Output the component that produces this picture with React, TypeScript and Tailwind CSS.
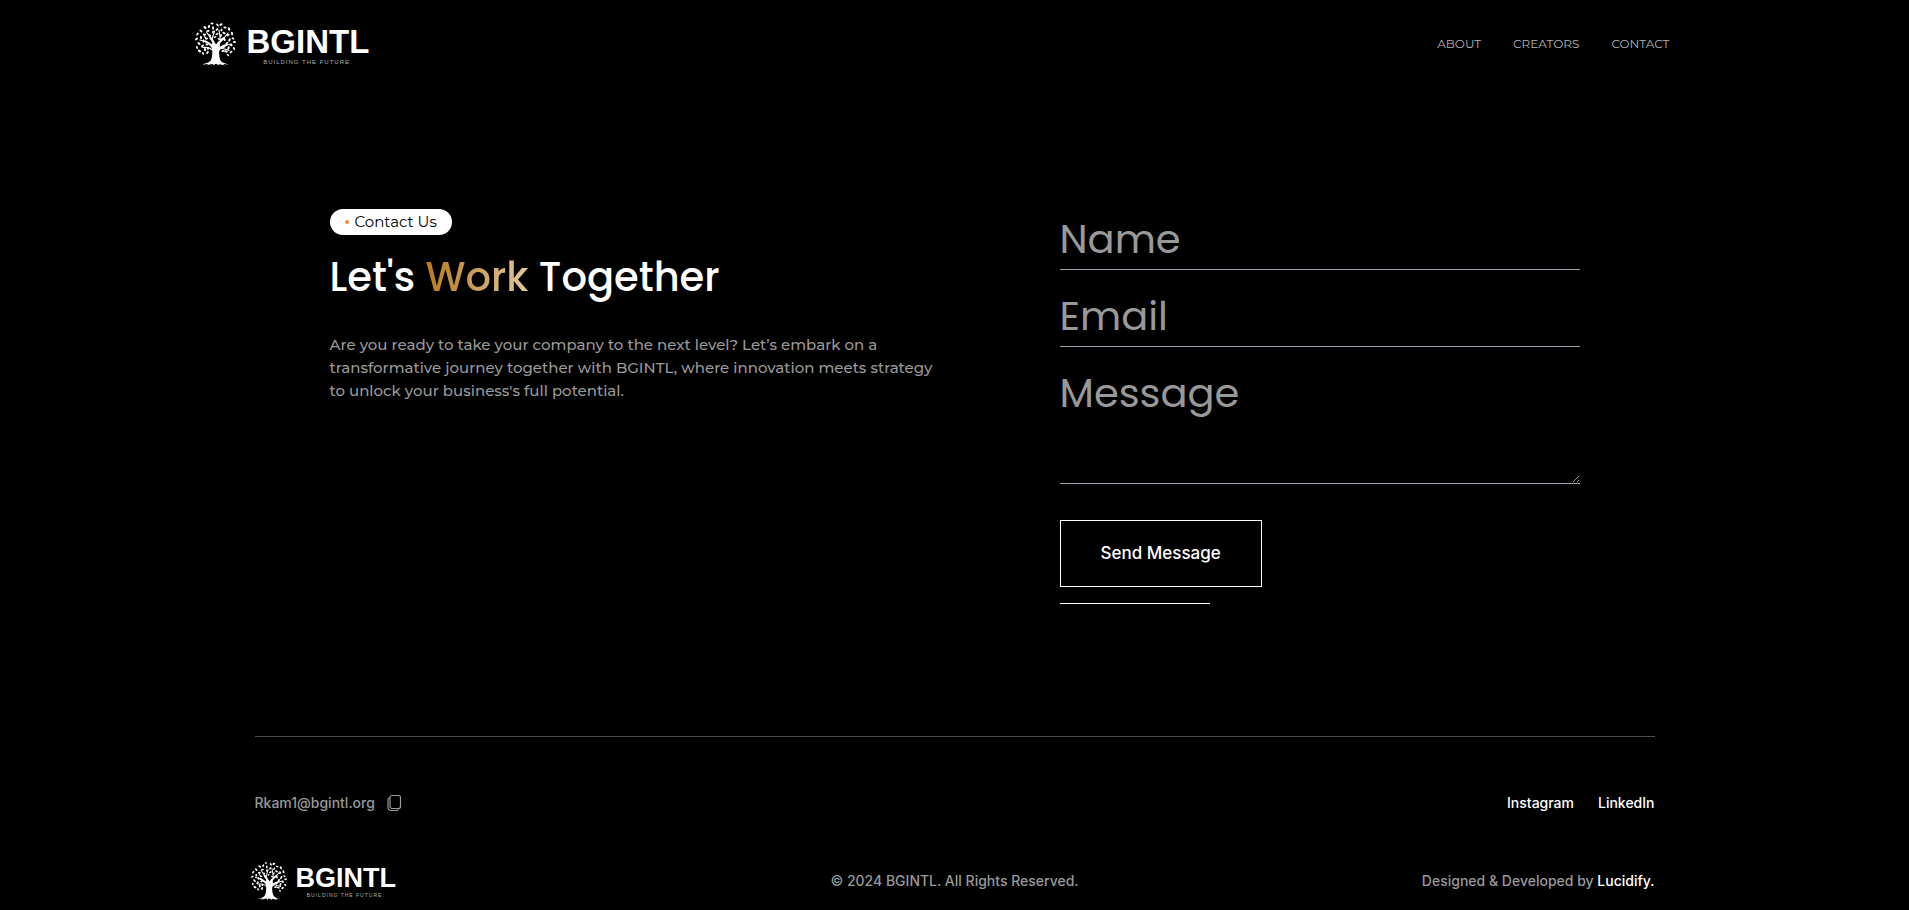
import React from "react";

const leafDots: [number, number, number][] = [
  [17, 1.5, 1], [22.5, 3, 1.1], [14, 4.5, 1.1], [26, 2.5, 1.1], [10, 5.5, 1.2], [18, 6, 1.1], [22, 7.5, 1.1],
  [30, 5.5, 1.1], [34, 7, 1.2], [26.5, 8, 1], [13, 9, 1.1], [6, 9, 1.2], [18, 10, 1], [22, 12, 1.1], [29, 11, 1.1],
  [37, 11.5, 1.2], [2.5, 12, 1.1], [9.5, 12.5, 1.1], [15, 13.5, 1], [26, 13.5, 1], [33, 13, 1.1], [38, 16.5, 1],
  [6, 15.5, 1.2], [1.5, 17, 1.1], [11.5, 16.5, 1], [29.5, 17.5, 1.1], [34.5, 18, 1.2], [39.5, 20, 1.1], [4, 21.5, 1.2],
  [8.5, 19, 1.1], [32, 21, 1.1], [36, 23, 1.1], [2, 25.5, 1], [7.5, 24, 1.2], [12, 22.5, 1], [39, 26.5, 1],
  [33.5, 26, 1.2], [29, 25, 1], [4.5, 29, 1.2], [10, 27.5, 1.2], [36, 30, 1.1], [31, 29.5, 1.2], [8, 31.5, 1],
  [12.5, 30.5, 1.1], [28, 29, 1.1], [33, 33, 0.9], [13, 26.5, 1], [20, 15, 0.9], [24, 17, 0.9],
];

function TreeMark({ className }: { className: string }) {
  return (
    <svg viewBox="0 0 41 44" className={className} fill="currentColor" aria-hidden="true">
      {leafDots.map(([x, y, r], i) => (
        <ellipse key={i} cx={x} cy={y} rx={r * 1.5} ry={r * 0.9} transform={`rotate(${(i * 53) % 180} ${x} ${y})`} />
      ))}
      <path d="M16.5 22.5c.8 3 1 5.500.8 8.500-.2 4-.8 7-2.500 8.600-2 1.500-4.800 1.700-7.300 3 2.600-.5 4.200-.7 6-.7-.8.500-1.500 1-2 1.600 2-.8 4-1.300 6.200-1.500l1.300 1.500.8-1.500 2 .1 1.600 1.400.4-1.300c2.200.1 4.200.6 6.200 1.400-.5-.6-1.200-1.100-2-1.500 2 0 3.500.3 5.800.7-2.500-1.300-5.200-1.500-7.200-3-1.700-1.500-2.400-4.600-2.500-8.600 0-2.500.2-4.500 1-6.700l-1.600-5.500-2.200 3.200-3-2.500Z" />
      <g fill="none" stroke="currentColor" strokeLinecap="round">
        <path strokeWidth="2.200" d="M18.500 28c-.6-4-3.500-6.500-8-8.500M20 26c-.5-4-1.500-7-4.500-10M22.500 26c0-4 2-7 6.500-10M22.500 30c1.500-4 4.500-6 9-7" />
        <path strokeWidth="1.100" d="M10.500 19.500 5 18M15.500 16l-4-6M17 17.500l2.500-8.500M29 16l4-5M25.500 18.500 24 8M31.500 23l5-1M17 28c-2-2.500-5-3-9-2.500M26 26.500c3 0 5 1 8 2M9 13l2 4" />
      </g>
    </svg>
  );
}

function Logo({ small = false }: { small?: boolean }) {
  return (
    <a href="#home" aria-label="BGINTL home" className={small ? "-ml-1 flex items-start gap-[9px] text-white" : "flex items-start gap-[11px] text-white"}>
      <TreeMark className={small ? "h-10 w-9" : "h-11 w-[41px]"} />
      <span
        className={
          small
            ? "flex flex-col items-center pt-1 font-['Liberation_Sans',sans-serif] text-[27px] leading-[27px] font-bold"
            : "flex flex-col items-center pt-[3px] font-['Liberation_Sans',sans-serif] text-[33px] leading-[34px] font-bold"
        }
      >
        BGINTL
        <span
          className={
            small
              ? "text-[5px] leading-[6px] font-normal tracking-[1px] text-[#b0b0b0]"
              : "text-[6px] leading-[6px] font-normal tracking-[1px] text-[#b0b0b0]"
          }
        >
          BUILDING THE FUTURE.
        </span>
      </span>
    </a>
  );
}

function CopyIcon() {
  return (
    <svg viewBox="0 0 16 18" className="h-[18px] w-4" fill="none" stroke="currentColor" strokeWidth="1.200" aria-hidden="true">
      <rect x="4" y="1.500" width="10.500" height="13" rx="2" />
      <path d="M4 3.500c-1.300.2-2 1-2 2.300V13c0 2.500 1 3.500 3.500 3.500H10c1.300 0 2-.4 2.400-1.300" />
    </svg>
  );
}

const fieldClass =
  "block w-full border-b border-gray-400 bg-transparent font-['Poppins',sans-serif] text-[40px] leading-[60px] text-white outline-none placeholder:text-[#999999]";

export default function App() {
  return (
    <div className="min-h-screen overflow-x-hidden bg-black font-['Inter',sans-serif] text-white">
      <header className="mx-auto flex max-w-[1520px] items-start justify-between pr-[45px] pt-[22px]">
        <Logo />
        <nav className="flex gap-8 pt-3 font-['Montserrat',sans-serif] text-xs leading-5 text-[#b3b3b3]">
          <a href="#about">ABOUT</a>
          <a href="#creators">CREATORS</a>
          <a href="#contact">CONTACT</a>
        </nav>
      </header>

      <main className="mx-auto flex max-w-[1250px] items-start justify-between pt-[143px]">
        <section className="max-w-[620px]">
          <p className="flex h-[26px] w-fit items-center gap-1.5 rounded-full bg-white px-[15px] font-['Montserrat',sans-serif] text-[15px] text-black">
            <span className="size-1 rounded-full bg-[#ff8a3c]" />
            Contact Us
          </p>
          <h1 className="mt-3 font-['Poppins',sans-serif] text-[40px] leading-[60px] font-medium">
            Let's <span className="bg-linear-to-r from-[#b8790f] to-[#e0c797] bg-clip-text text-transparent">Work</span> Together
          </h1>
          <p className="mt-[26px] font-['Montserrat',sans-serif] text-[15px] leading-[23px] font-medium text-[#999999]">
            Are you ready to take your company to the next level? Let’s embark on a transformative journey together with
            BGINTL, where innovation meets strategy to unlock your business's full potential.
          </p>
        </section>

        <form className="w-[520px]" onSubmit={(e) => e.preventDefault()}>
          <input aria-label="Name" placeholder="Name" type="text" className={fieldClass} />
          <input aria-label="Email" placeholder="Email" type="email" className={`${fieldClass} mt-4`} />
          <textarea aria-label="Message" placeholder="Message" className={`${fieldClass} mt-4 h-[121px] resize`} />
          <button type="submit" className="mt-9 border border-white px-10 py-5 text-[17px] leading-[25px] font-medium">
            Send Message
          </button>
          <div className="mt-4 w-[150px] border-t border-white" />
        </form>
      </main>

      <footer className="mx-auto mt-[132px] max-w-[1400px] border-t border-[#4d4d4d] text-sm leading-5 font-medium text-[#999999]">
        <div className="flex items-center justify-between pt-14">
          <div className="flex items-center gap-[11px]">
            <a href="mailto:Rkam1@bgintl.org">Rkam1@bgintl.org</a>
            <button type="button" aria-label="Copy email address">
              <CopyIcon />
            </button>
          </div>
          <nav className="flex gap-6 text-white">
            <a href="#instagram">Instagram</a>
            <a href="#linkedin">LinkedIn</a>
          </nav>
        </div>
        <div className="grid grid-cols-3 items-center pt-12">
          <Logo small />
          <p className="text-center">© 2024 BGINTL. All Rights Reserved.</p>
          <p className="text-right">
            Designed &amp; Developed by{" "}
            <a href="#lucidify" className="text-white">
              Lucidify.
            </a>
          </p>
        </div>
      </footer>
    </div>
  );
}
